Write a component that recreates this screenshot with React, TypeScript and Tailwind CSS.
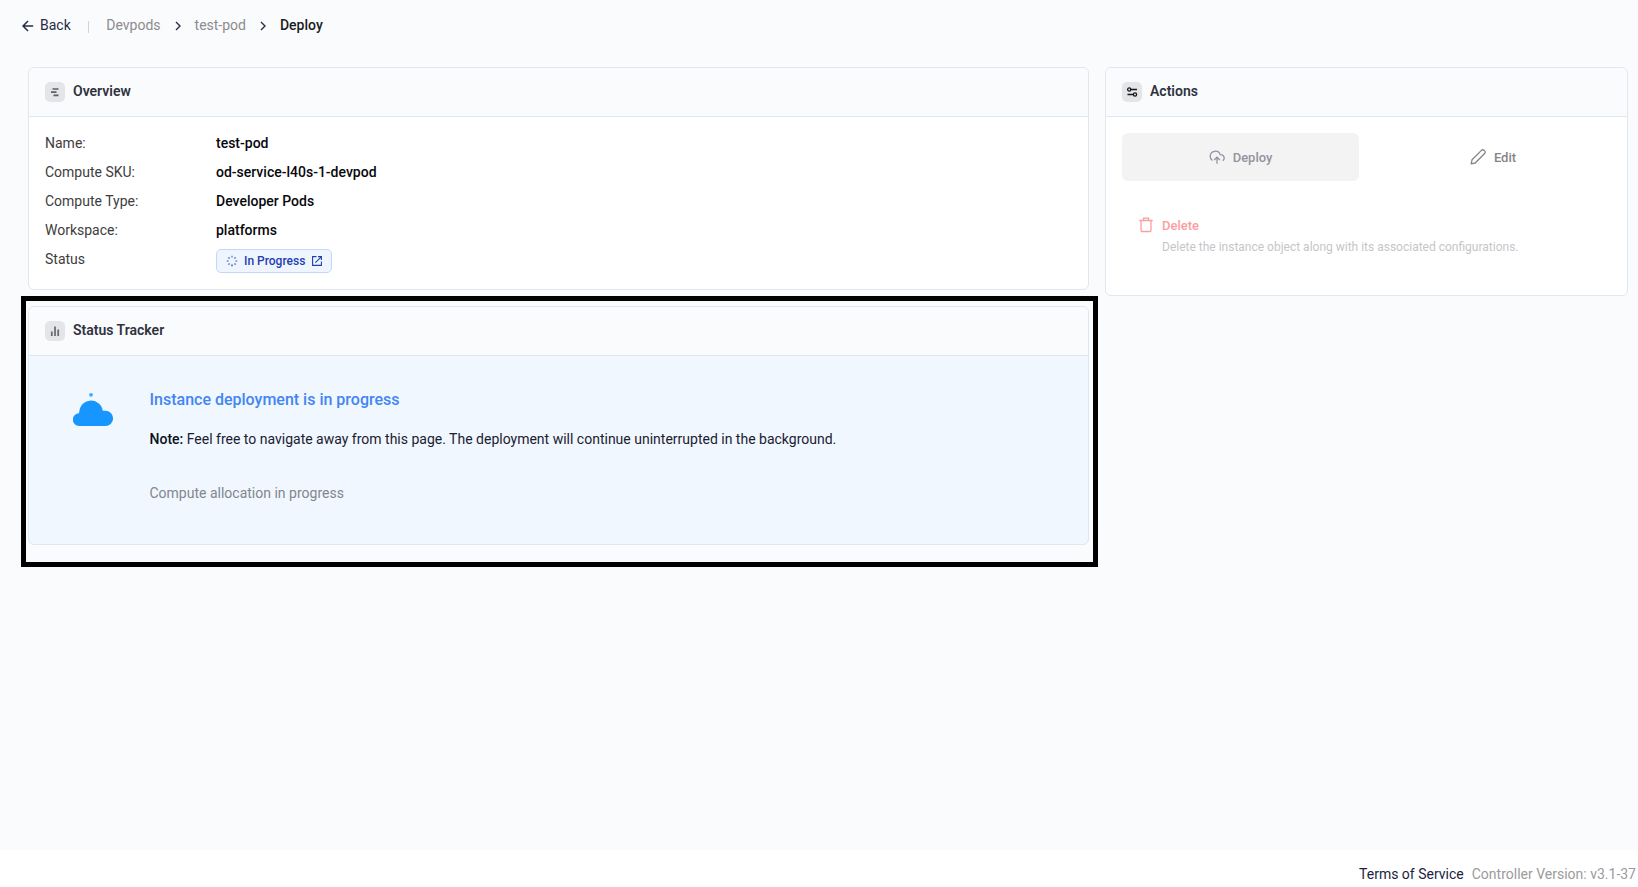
import type { ReactNode } from "react";

const details = [
  { label: "Name:", value: "test-pod" },
  { label: "Compute SKU:", value: "od-service-l40s-1-devpod" },
  { label: "Compute Type:", value: "Developer Pods" },
  { label: "Workspace:", value: "platforms" },
];

function Chevron() {
  return (
    <svg className="h-3 w-3" viewBox="0 0 12 12" fill="none" stroke="#2b3048" strokeWidth="1.4">
      <path d="M4 2l4 4-4 4" />
    </svg>
  );
}

function Breadcrumbs() {
  return (
    <nav className="flex h-[50px] items-center pb-px pl-[22px] text-sm text-[#8c8c8c]">
      <a className="flex items-center text-[#262b45]">
        <svg className="mr-[6px] mt-[3px] h-3 w-3" viewBox="0 0 12 12" fill="none" stroke="currentColor" strokeWidth="1.5">
          <path d="M11.2 6H1M6 1L1 6l5 5" />
        </svg>
        Back
      </a>
      <span className="ml-[17px] mt-1 h-3 w-px bg-[#d4d4d8]" />
      <span className="ml-[17.5px]">Devpods</span>
      <span className="mt-0.5 mr-[10.5px] ml-[11.5px]"><Chevron /></span>
      <span>test-pod</span>
      <span className="mt-0.5 mr-[10.5px] ml-[11.5px]"><Chevron /></span>
      <span className="font-medium text-[#1c1c1e]">Deploy</span>
    </nav>
  );
}

function Card({ title, icon, className = "", children }: { title: string; icon: ReactNode; className?: string; children: ReactNode }) {
  return (
    <section className={`overflow-hidden rounded-md border border-[#e0e7f0] ${className}`}>
      <header className="flex h-[49px] items-center border-b border-[#dfe7f1] bg-[#fafbfd] px-4">
        <span className="mr-2 flex h-5 w-5 items-center justify-center rounded-[5px] bg-[#e4e5e8]">{icon}</span>
        <h2 className="mb-0.5 text-sm font-semibold text-[#2f3340]">{title}</h2>
      </header>
      {children}
    </section>
  );
}

// Short ticks round a circle, the bottom one darkest
function Spinner() {
  return (
    <svg className="h-3 w-3" viewBox="0 0 12 12" stroke="#1e40af" strokeWidth="1.5">
      {[0, 45, 90, 135, 180, 225, 270, 315].map((a) => (
        <path key={a} d="M6 .8v1.8" transform={`rotate(${a} 6 6)`} opacity={a === 180 ? 0.9 : 0.6} />
      ))}
    </svg>
  );
}

function Overview() {
  return (
    <Card
      title="Overview"
      className="h-[223px] bg-white"
      icon={
        <svg className="h-3 w-3" viewBox="0 0 12 12" stroke="#5c5f66" strokeWidth="1.7">
          <path d="M3.5 3h6M2 6.2h5.5M4.5 9.4h5" />
        </svg>
      }
    >
      <dl className="px-4 pt-[11px] text-sm">
        {details.map((d) => (
          <div key={d.label} className="flex h-[29px] items-center">
            <dt className="w-[171px] text-[#3d3d3d]">{d.label}</dt>
            <dd className="font-medium text-[#08080c]">{d.value}</dd>
          </div>
        ))}
        <div className="flex h-[29px] items-center">
          <dt className="w-[171px] text-[#3d3d3d]">Status</dt>
          <dd className="mt-[5px] flex h-6 w-[116px] items-center rounded-[5px] border border-[#c3d7f8] bg-[#eff5ff] pl-[9px] text-xs font-medium text-[#1e40af]">
            <Spinner />
            <span className="ml-[6px]">In Progress</span>
            <svg className="ml-[7px] h-[10px] w-[10px]" viewBox="0 0 10 10" fill="none" stroke="currentColor" strokeWidth="1.1">
              <path d="M4.5.6H.6v8.8h8.8V5.5M6 .6h3.4V4M9.2.8L3.4 6.6" />
            </svg>
          </dd>
        </div>
      </dl>
    </Card>
  );
}

function StatusTracker() {
  return (
    <div className="relative mt-4">
      <Card
        title="Status Tracker"
        className="h-[239px] bg-[#f0f7ff]"
        icon={
          <svg className="h-3 w-3" viewBox="0 0 12 12" stroke="#6b6d73" strokeWidth="1.8">
            <path d="M2.8 6.5V11M6 1.5V11M9.2 4.5V11" />
          </svg>
        }
      >
        <div className="flex pl-11">
          <svg className="mt-9 h-[34px] w-[41px]" viewBox="0 0 41 34" fill="#1896ff">
            <circle cx="18" cy="2.8" r="1.9" opacity=".8" />
            <path d="M6.3 34A6.35 6.35 0 0 1 6 21.3A12 12.3 0 0 1 29.8 18.700H32.500A7.650 7.650 0 0 1 32.500 34z" />
          </svg>
          <div className="ml-[35.5px]">
            <h3 className="mt-8 text-base leading-6 font-medium text-[#4285f4]">Instance deployment is in progress</h3>
            <p className="mt-[15px] text-sm leading-6 text-[#1b2030]">
              <span className="font-medium text-[#0d111c]">Note:</span> Feel free to navigate away from this page. The deployment will continue uninterrupted in the background.
            </p>
            <p className="mt-[30px] text-sm leading-6 text-[#82868d]">Compute allocation in progress</p>
          </div>
        </div>
      </Card>
      {/* highlight frame */}
      <div className="pointer-events-none absolute -top-[10px] -right-[9px] -bottom-[22px] -left-[7px] border-[5px] border-black" />
    </div>
  );
}

function Actions() {
  return (
    <Card
      title="Actions"
      className="h-[229px] bg-white"
      icon={
        <svg className="h-3 w-3" viewBox="0 0 12 12" fill="none" stroke="#18181b" strokeWidth="1.3">
          <circle cx="3.2" cy="3.5" r="1.6" />
          <path d="M4.8 3.5H11M1.5 8.5h6" />
          <circle cx="9" cy="8.5" r="1.6" />
        </svg>
      }
    >
      <div className="flex px-4 pt-4">
        <button className="flex h-12 w-[237px] items-center justify-center rounded-md bg-[#f3f3f3] text-[13px] font-medium text-[#9294a0]">
          <svg className="mr-2 h-4 w-4" viewBox="0 0 16 16" fill="none" stroke="currentColor" strokeWidth="1.3">
            <path d="M3.4 11.5A5 5 0 0 1 1.2 7.2a5.2 5.2 0 0 1 10.1-1.5c2.5.1 3.9 1.6 3.9 3.5 0 1.1-.6 1.900-1.500 2.500M8 14.800V8.300M5.200 11L8 8.200l2.800 2.800" />
          </svg>
          <span className="pt-px">Deploy</span>
        </button>
        <button className="ml-4 flex h-12 w-[236px] items-center justify-center text-[13px] font-medium text-[#858587]">
          <svg className="mr-2 h-4 w-4" viewBox="0 0 16 16" fill="none" stroke="currentColor" strokeWidth="1.3" strokeLinejoin="round">
            <path d="M1.2 14.8l.8-4L11.2 1.6a2.2 2.2 0 0 1 3.2 3.2L5.2 14z" />
          </svg>
          <span className="pt-px">Edit</span>
        </button>
      </div>
      <div className="mt-8 flex pl-[33px]">
        <svg className="mt-1 h-4 w-[14px] text-[#fa9f9f]" viewBox="0 0 14 16" fill="none" stroke="currentColor" strokeWidth="1.3">
          <path d="M.3 3.5h13.4M2 3.5v10a1 1 0 0 0 1 1h8a1 1 0 0 0 1-1v-10M4.5 3.500V1.200h5v2.300" />
        </svg>
        <div className="ml-[9px]">
          <p className="pt-px text-[13px] leading-6 font-medium text-[#fb9ea0]">Delete</p>
          <p className="text-xs leading-[18px] text-[#c5c6c8]">Delete the instance object along with its associated configurations.</p>
        </div>
      </div>
    </Card>
  );
}

export default function App() {
  return (
    <div className="flex h-screen flex-col overflow-hidden bg-[#fafbfd] font-[Roboto,sans-serif]">
      <Breadcrumbs />
      <main className="flex flex-1 items-start gap-4 pt-[17px] pr-[10.5px] pl-7">
        <div className="w-[1061px] shrink-0">
          <Overview />
          <StatusTracker />
        </div>
        <div className="flex-1">
          <Actions />
        </div>
      </main>
      <footer className="flex h-[37px] shrink-0 items-center justify-end gap-2 bg-white pt-[10px] pr-[2px] text-sm">
        <a className="text-[#1d2340]">Terms of Service</a>
        <span className="text-[#9b9b9d]">Controller Version: v3.1-37</span>
      </footer>
    </div>
  );
}
